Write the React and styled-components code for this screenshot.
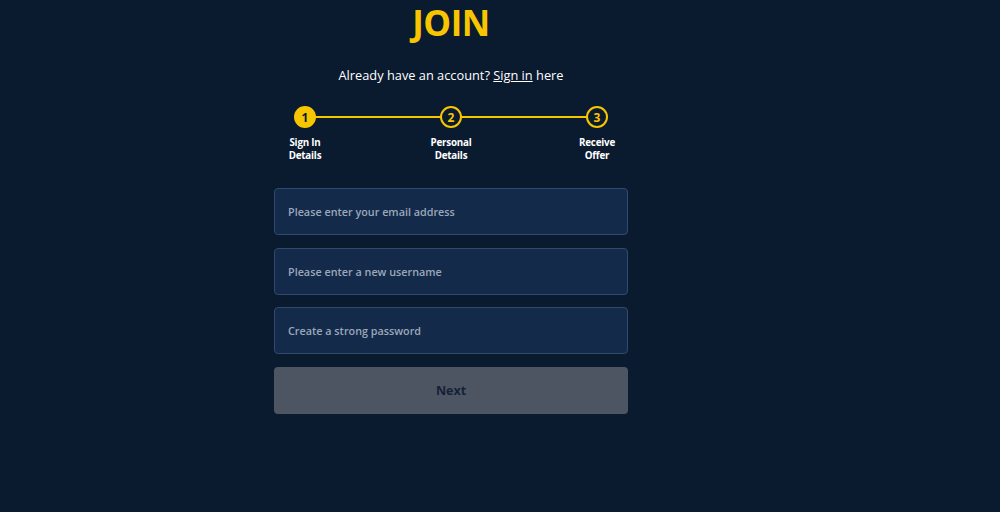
import React from "react";
import styled, { createGlobalStyle } from "styled-components";

const GlobalStyle = createGlobalStyle`
  html, body {
    margin: 0;
    padding: 0;
    background: #0a1a2f;
    font-family: "Open Sans", "Noto Sans", Arial, sans-serif;
  }
`;

const Page = styled.main`
  width: 1000px;
  height: 512px;
  box-sizing: border-box;
  padding-right: 98px;
  display: flex;
  justify-content: center;
  background: #0a1a2f;
`;

const Column = styled.div`
  width: 354px;
  display: flex;
  flex-direction: column;
  align-items: stretch;
`;

const Title = styled.h1`
  margin: 0;
  padding-top: 2px;
  text-align: center;
  color: #f7c600;
  font-size: 35px;
  font-weight: 700;
  line-height: 42px;
  letter-spacing: -0.5px;
`;

const SubText = styled.p`
  margin: 21px 0 0;
  text-align: center;
  color: #ffffff;
  font-size: 12.8px;
  line-height: 20px;

  & a {
    color: #ffffff;
    text-decoration: underline;
  }
`;

const Stepper = styled.div`
  position: relative;
  margin-top: 21px;
  display: flex;
  justify-content: space-between;
  padding: 0 2px;
`;

const Track = styled.div`
  position: absolute;
  top: 10px;
  left: 31px;
  right: 31px;
  height: 2px;
  background: #f7c600;
`;

const Step = styled.div`
  position: relative;
  width: 58px;
  display: flex;
  flex-direction: column;
  align-items: center;
`;

const Dot = styled.div`
  width: 22px;
  height: 22px;
  box-sizing: border-box;
  border-radius: 50%;
  border: 2px solid #f7c600;
  background: ${(p) => (p.$active ? "#f7c600" : "#0a1a2f")};
  color: ${(p) => (p.$active ? "#0a1a2f" : "#f7c600")};
  display: flex;
  align-items: center;
  justify-content: center;
  font-size: 12px;
  font-weight: 700;
`;

const StepLabel = styled.span`
  margin-top: 8px;
  color: #ffffff;
  font-size: 9.8px;
  font-weight: 700;
  line-height: 13px;
  text-align: center;
  letter-spacing: -0.2px;
`;

const Form = styled.form`
  margin-top: 26px;
  display: flex;
  flex-direction: column;
  gap: 12.5px;
`;

const Input = styled.input`
  height: 47px;
  box-sizing: border-box;
  border: 1px solid #2f4a6d;
  border-radius: 4px;
  background: #142a4a;
  padding: 0 13px;
  color: #ffffff;
  font-family: inherit;
  font-size: 10.8px;
  font-weight: 600;
  outline: none;

  &::placeholder {
    color: #9ba8ba;
  }
`;

const NextButton = styled.button`
  height: 47px;
  border: none;
  border-radius: 4px;
  background: #4e5562;
  color: #142238;
  font-family: inherit;
  font-size: 12.5px;
  font-weight: 700;
  cursor: not-allowed;
`;

const steps = [
  { n: 1, label: ["Sign In", "Details"] },
  { n: 2, label: ["Personal", "Details"] },
  { n: 3, label: ["Receive", "Offer"] },
];

export default function App() {
  return (
    <>
      <GlobalStyle />
      <Page>
        <Column>
          <Title>JOIN</Title>
          <SubText>
            Already have an account? <a href="#signin">Sign in</a> here
          </SubText>
          <Stepper>
            <Track />
            {steps.map((s) => (
              <Step key={s.n}>
                <Dot $active={s.n === 1}>{s.n}</Dot>
                <StepLabel>
                  {s.label[0]}
                  <br />
                  {s.label[1]}
                </StepLabel>
              </Step>
            ))}
          </Stepper>
          <Form onSubmit={(e) => e.preventDefault()}>
            <Input type="email" placeholder="Please enter your email address" />
            <Input type="text" placeholder="Please enter a new username" />
            <Input type="password" placeholder="Create a strong password" />
            <NextButton type="submit" disabled>
              Next
            </NextButton>
          </Form>
        </Column>
      </Page>
    </>
  );
}
